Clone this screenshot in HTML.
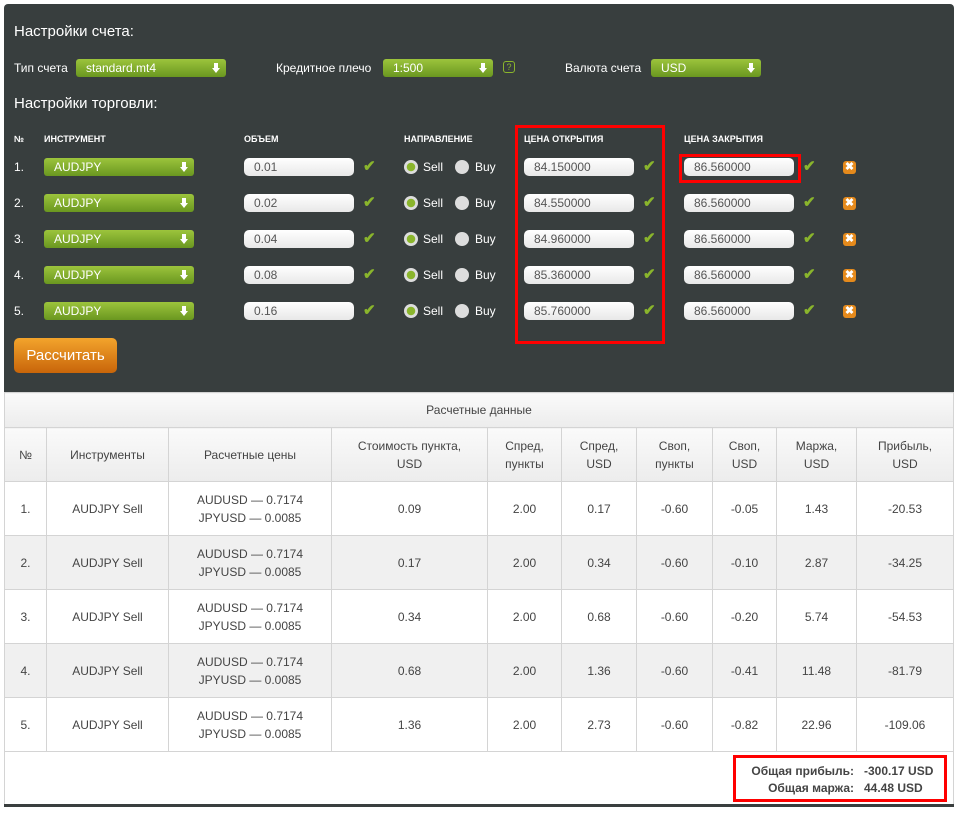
<!DOCTYPE html>
<html><head><meta charset="utf-8"><style>
*{box-sizing:border-box;margin:0;padding:0}
body{width:959px;height:814px;background:#fff;font-family:"Liberation Sans",Arial,sans-serif;position:relative;overflow:hidden}
.dark{position:absolute;left:4px;top:4px;width:950px;height:388px;background:#383e3e;border-radius:4px 4px 0 0}
.a{position:absolute;color:#fff;white-space:nowrap}
.sel{position:absolute;height:18px;border-radius:3px;background:linear-gradient(#9cc43c,#6a9720);color:#fff;font-size:12px;line-height:18px;padding-left:10px}
.sel:after{content:"";position:absolute;right:8px;top:4px;width:4px;height:5px;background:#fff}
.sel:before{content:"";position:absolute;right:6px;top:9px;border:4px solid transparent;border-top:5px solid #fff;border-bottom:0}
.inp{position:absolute;height:18px;border-radius:5px;background:linear-gradient(#fff,#e8e8e8);color:#555;font-size:12px;line-height:18px;padding-left:10px;width:110px}
.ck{position:absolute;color:#8ab52c;font-size:15px;font-weight:bold;line-height:18px}
.rad{position:absolute;width:14px;height:14px;border-radius:50%;background:#ddd}
.rad.on{background:radial-gradient(#8ab52c 40%,#ddd 45%)}
.x{position:absolute;width:13px;height:13px;border-radius:3px;background:#e58a1c;color:#fff;font-size:11px;line-height:13px;text-align:center;font-weight:bold}
.h{position:absolute;color:#fff;font-size:9px;font-weight:bold;top:134px}
table{position:absolute;left:4px;top:392px;width:950px;border-collapse:collapse;font-size:12px;color:#444;text-align:center}
td{border:1px solid #d4d4d4;vertical-align:middle;line-height:18px}
tr.hd td{background:linear-gradient(#fafafa,#ececec)}
tr.g td{background:#f0f0f0}
</style></head><body>
<div class="dark"></div>
<div class="a" style="left:14px;top:23px;font-size:15px">Настройки счета:</div>
<div class="a" style="left:14px;top:61px;font-size:12px">Тип счета</div>
<div class="sel" style="left:76px;top:59px;width:150px">standard.mt4</div>
<div class="a" style="left:276px;top:61px;font-size:12px">Кредитное плечо</div>
<div class="sel" style="left:383px;top:59px;width:110px">1:500</div>
<div class="a" style="left:503px;top:61px;width:12px;height:12px;border:1px solid #8ab52c;border-radius:3px;color:#8ab52c;font-size:9px;text-align:center;line-height:11px">?</div>
<div class="a" style="left:565px;top:61px;font-size:12px">Валюта счета</div>
<div class="sel" style="left:651px;top:59px;width:110px">USD</div>
<div class="a" style="left:14px;top:95px;font-size:15px">Настройки торговли:</div>
<div class="h" style="left:14px">№</div>
<div class="h" style="left:44px">ИНСТРУМЕНТ</div>
<div class="h" style="left:244px">ОБЪЕМ</div>
<div class="h" style="left:404px">НАПРАВЛЕНИЕ</div>
<div class="h" style="left:524px">ЦЕНА ОТКРЫТИЯ</div>
<div class="h" style="left:684px">ЦЕНА ЗАКРЫТИЯ</div>

<div id="rows"></div>
<div style="position:absolute;left:515px;top:125px;width:150px;height:219px;border:3px solid #f00"></div>
<div style="position:absolute;left:679px;top:154px;width:122px;height:29px;border:3px solid #f00"></div>
<div class="a" style="left:14px;top:338px;width:103px;height:35px;border-radius:5px;background:linear-gradient(#f3a42c,#c8650a);font-size:15px;line-height:35px;text-align:center">Рассчитать</div>

<table>
<tr class="hd"><td colspan="10" style="height:35px">Расчетные данные</td></tr>
<tr class="hd" style="height:54px"><td style="width:42px">№</td><td style="width:122px">Инструменты</td><td style="width:163px">Расчетные цены</td><td style="width:156px">Стоимость пункта,<br>USD</td><td style="width:74px">Спред,<br>пункты</td><td style="width:75px">Спред,<br>USD</td><td style="width:76px">Своп,<br>пункты</td><td style="width:64px">Своп,<br>USD</td><td style="width:80px">Маржа,<br>USD</td><td>Прибыль,<br>USD</td></tr>
<tr style="height:54px"><td>1.</td><td>AUDJPY Sell</td><td>AUDUSD — 0.7174<br>JPYUSD — 0.0085</td><td>0.09</td><td>2.00</td><td>0.17</td><td>-0.60</td><td>-0.05</td><td>1.43</td><td>-20.53</td></tr>
<tr class="g" style="height:54px"><td>2.</td><td>AUDJPY Sell</td><td>AUDUSD — 0.7174<br>JPYUSD — 0.0085</td><td>0.17</td><td>2.00</td><td>0.34</td><td>-0.60</td><td>-0.10</td><td>2.87</td><td>-34.25</td></tr>
<tr style="height:54px"><td>3.</td><td>AUDJPY Sell</td><td>AUDUSD — 0.7174<br>JPYUSD — 0.0085</td><td>0.34</td><td>2.00</td><td>0.68</td><td>-0.60</td><td>-0.20</td><td>5.74</td><td>-54.53</td></tr>
<tr class="g" style="height:54px"><td>4.</td><td>AUDJPY Sell</td><td>AUDUSD — 0.7174<br>JPYUSD — 0.0085</td><td>0.68</td><td>2.00</td><td>1.36</td><td>-0.60</td><td>-0.41</td><td>11.48</td><td>-81.79</td></tr>
<tr style="height:54px"><td>5.</td><td>AUDJPY Sell</td><td>AUDUSD — 0.7174<br>JPYUSD — 0.0085</td><td>1.36</td><td>2.00</td><td>2.73</td><td>-0.60</td><td>-0.82</td><td>22.96</td><td>-109.06</td></tr>
<tr style="height:54px"><td colspan="10" style="border-bottom:3px solid #3a3f3f"></td></tr>
</table>
<div style="position:absolute;left:733px;top:755px;width:214px;height:47px;border:3px solid #f00;font-size:12px;font-weight:bold;color:#444;line-height:17px;padding-top:5px">
<div style="position:absolute;right:90px;top:5px">Общая прибыль:</div><div style="position:absolute;left:128px;top:5px">-300.17 USD</div>
<div style="position:absolute;right:90px;top:22px">Общая маржа:</div><div style="position:absolute;left:128px;top:22px">44.48 USD</div>
</div>
<script>
var v=["0.01","0.02","0.04","0.08","0.16"],o=["84.150000","84.550000","84.960000","85.360000","85.760000"],h="";
for(var i=0;i<5;i++){var t=158+i*36;
h+='<div class="a" style="left:14px;top:'+(t+2)+'px;font-size:12px">'+(i+1)+'.</div>'+
'<div class="sel" style="left:44px;top:'+t+'px;width:150px">AUDJPY</div>'+
'<div class="inp" style="left:244px;top:'+t+'px">'+v[i]+'</div><div class="ck" style="left:363px;top:'+t+'px">✔</div>'+
'<div class="rad on" style="left:404px;top:'+(t+2)+'px"></div><div class="a" style="left:423px;top:'+(t+2)+'px;font-size:12px">Sell</div>'+
'<div class="rad" style="left:455px;top:'+(t+2)+'px"></div><div class="a" style="left:475px;top:'+(t+2)+'px;font-size:12px">Buy</div>'+
'<div class="inp" style="left:524px;top:'+t+'px">'+o[i]+'</div><div class="ck" style="left:643px;top:'+t+'px">✔</div>'+
'<div class="inp" style="left:684px;top:'+t+'px">86.560000</div><div class="ck" style="left:803px;top:'+t+'px">✔</div>'+
'<div class="x" style="left:843px;top:'+(t+3)+'px">✖</div>';}
document.getElementById("rows").innerHTML=h;
</script>
</body></html>
